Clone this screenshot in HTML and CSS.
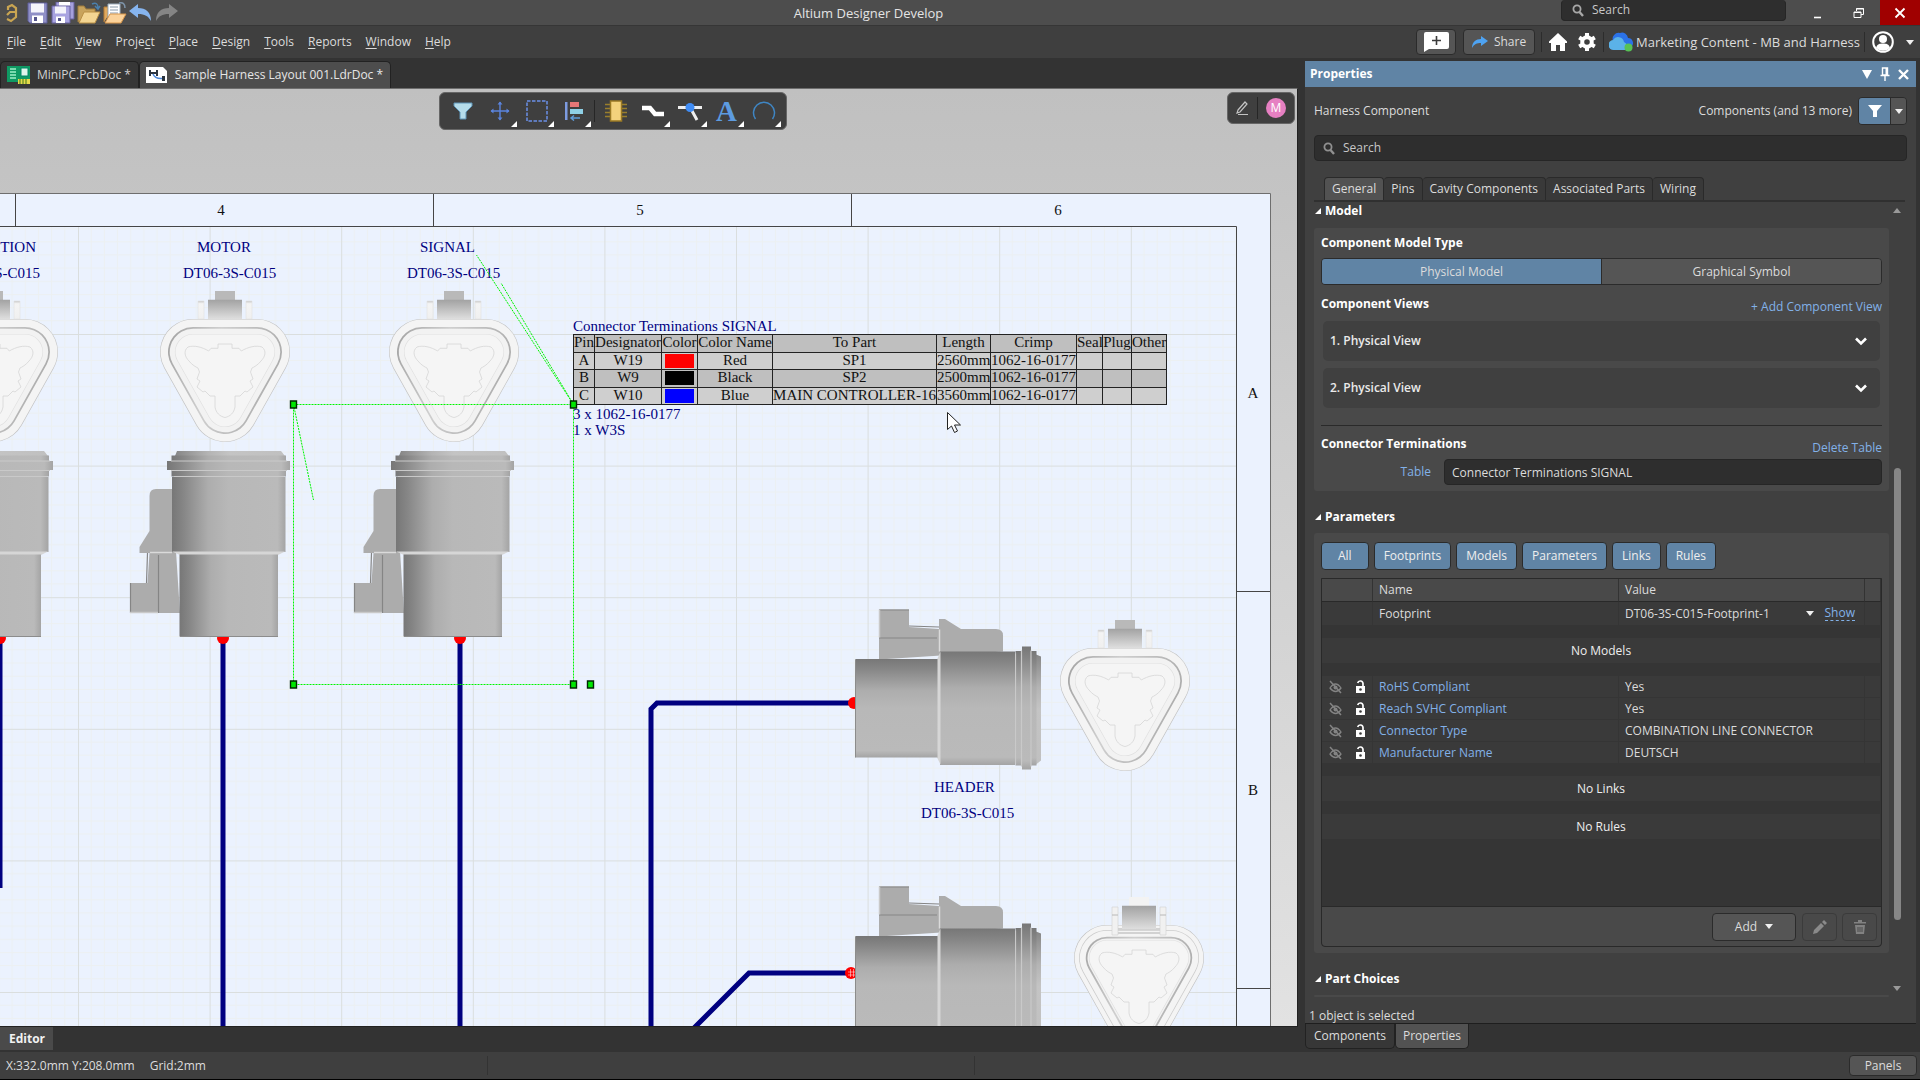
FILE: index.html
```html
<!DOCTYPE html>
<html lang="en">
<head>
<meta charset="utf-8">
<title>Altium Designer Develop</title>
<link rel="stylesheet" href="styles.css">
</head>
<body>
<header class="titlebar">
  <div class="quick">
    <svg class="logo" width="14" height="20" viewBox="0 0 14 20"><path d="M3 7V4l4-2 4 3v9l-5 4-4-2M11 9H5l-3 3" fill="none" stroke="#c9a552" stroke-width="2.200"/></svg>
    <button class="tool" aria-label="Save"><svg width="22" height="22" viewBox="0 0 22 22"><path d="M1 1h19v20H3l-2-2z" fill="#8f8fc6" stroke="#5f5f9a"/><path d="M4 1.500h13v9H4z" fill="#f4f4fb"/><path d="M5 13.500h11V21H5z" fill="#fff"/><path d="M7 15h3v4H7z" fill="#55558c"/></svg></button>
    <button class="tool" aria-label="Save All"><svg width="24" height="22" viewBox="0 0 24 22"><path d="M5 0h18v17H5z" fill="#a5a0dc" stroke="#66619e"/><path d="M8 0h11v6H8z" fill="#fff"/><path d="M1 4h18v17H1z" fill="#a8a3e0" stroke="#66619e"/><path d="M4 4.500h11v7H4z" fill="#f4f4fb"/><path d="M5 14.500h9V21H5z" fill="#fff"/><path d="M7 16h3v3H7z" fill="#55558c"/></svg></button>
    <button class="tool" aria-label="Open"><svg width="24" height="22" viewBox="0 0 24 22"><path d="M1 20V4h6l2 3h9v5" fill="#c8a35c" stroke="#a07c3c"/><path d="M2 21l5-11h16l-5 11z" fill="#f3d592" stroke="#b98f45"/><path d="M15 2c4-2 6 0 6 4m-3-2l3 3 2-3" fill="none" stroke="#4a80ad" stroke-width="1.500"/></svg></button>
    <button class="tool" aria-label="Open Project"><svg width="24" height="22" viewBox="0 0 24 22"><path d="M1 20V5h4v9" fill="#e0a95e" stroke="#b87f36"/><path d="M5 2h12v14H5z" fill="#fff" stroke="#9fb0c0"/><path d="M7 5h8M7 8h8M7 11h8" stroke="#8a9aaa"/><path d="M2 21l5-9h16l-5 9z" fill="#fbd29a" stroke="#d8964a"/><path d="M16 1c4-1 6 1 6 5" fill="none" stroke="#7d93a8" stroke-width="1.500"/></svg></button>
    <button class="tool" aria-label="Undo"><svg width="24" height="18" viewBox="0 0 24 18"><path d="M0 7l9-7v4c8 0 13 4 13 13-3-5-6-7-13-7v4z" fill="#86b4ee"/></svg></button>
    <button class="tool" aria-label="Redo"><svg width="24" height="18" viewBox="0 0 24 18"><path d="M23 7l-9-7v4C6 4 1 8 1 17c3-5 6-7 13-7v4z" fill="#858585"/></svg></button>
  </div>
  <h1 class="app-title">Altium Designer Develop</h1>
  <label class="search top-search">
    <svg width="12" height="13" viewBox="0 0 12 13"><circle cx="5" cy="5" r="3.600" fill="none" stroke="#a8a8a8" stroke-width="1.800"/><path d="M7.500 8l3.500 4" stroke="#a8a8a8" stroke-width="2.400"/></svg>
    <input type="text" placeholder="Search" aria-label="Search">
  </label>
  <div class="winctl">
    <button class="min" aria-label="Minimize"><svg width="12" height="14" viewBox="0 0 12 14"><path d="M3 11.500h7" stroke="#fff" stroke-width="1.600"/></svg></button>
    <button class="restore" aria-label="Restore"><svg width="12" height="12" viewBox="0 0 12 12"><path d="M3.500 4V1.500h7v6H8M1 5h7v5.500H1zM3 2h8M1 5.500h7" fill="none" stroke="#fff"/></svg></button>
    <button class="close" aria-label="Close"><svg width="12" height="12" viewBox="0 0 12 12"><path d="M1.500 1.500l9 9M10.500 1.500l-9 9" stroke="#fff" stroke-width="1.800"/></svg></button>
  </div>
</header>

<nav class="menubar">
  <div class="menus">
    <button><u>F</u>ile</button><button><u>E</u>dit</button><button><u>V</u>iew</button><button>Proje<u>c</u>t</button><button><u>P</u>lace</button><button><u>D</u>esign</button><button><u>T</u>ools</button><button><u>R</u>eports</button><button><u>W</u>indow</button><button><u>H</u>elp</button>
  </div>
  <div class="account">
    <button class="raised note" aria-label="Add comment"><svg width="25" height="20" viewBox="0 0 25 20"><path d="M2 0h21q2 0 2 2v13q0 2-2 2H5l-5 3V2q0-2 2-2z" fill="#fff"/><path d="M12.500 4v9M8 8.500h9" stroke="#3c3c3c" stroke-width="1.600"/></svg></button>
    <button class="raised share"><svg width="16" height="12" viewBox="0 0 16 12"><path d="M9 0l7 5-7 5V7C5 7 2 8 0 12c0-6 4-9 9-9z" fill="#4ea3f2"/></svg>Share</button>
    <i class="vsep"></i>
    <button aria-label="Home"><svg width="18" height="18" viewBox="0 0 18 18"><path d="M9 0l9 8.500V10h-2v8h-5v-6H7v6H2v-8H0V8.500z" fill="#fff"/></svg></button>
    <button class="gear" aria-label="Settings"><svg width="18" height="18" viewBox="0 0 18 18"><circle cx="9" cy="9" r="4.800" fill="none" stroke="#fff" stroke-width="4"/><path d="M9 0v4M9 14v4M1.200 4.500l3.400 2M13.400 11.500l3.400 2M1.200 13.500l3.400-2M13.400 6.500l3.400-2" stroke="#fff" stroke-width="4"/></svg></button>
    <i class="vsep"></i>
    <button class="workspace"><svg width="24" height="20" viewBox="0 0 24 20"><path d="M4 9a6 6 0 0 1 7-8 6 6 0 0 1 8 5 5 5 0 0 1 3 9H8z" fill="#2b72e8"/><path d="M5 18a5 5 0 0 1-1-10 6 6 0 0 1 11 2 4.500 4.500 0 0 1 1 8z" fill="#5bb2e8"/><circle cx="19.500" cy="15.500" r="4" fill="#57c255"/></svg>Marketing Content - MB and Harness</button>
    <i class="vsep"></i>
    <button class="avatar" aria-label="Account"><svg width="22" height="22" viewBox="0 0 22 22"><circle cx="11" cy="11" r="9.800" fill="none" stroke="#fff" stroke-width="2"/><circle cx="11" cy="8" r="4" fill="#fff"/><path d="M4 17c1-4 4-4.500 7-4.500s6 .500 7 4.500a10 10 0 0 1-14 0z" fill="#fff"/></svg><i class="caret"></i></button>
  </div>
</nav>

<main class="work">
  <section class="docs">
    <div class="doc-tabs">
      <button class="doc-tab"><svg width="24" height="18" viewBox="0 0 24 18"><path d="M0 0h23v16H0z" fill="#0f9a63"/><path d="M3 3h6M3 6h6M3 9h6M3 12h6" stroke="#9ff0c8" stroke-width="1.500"/><path d="M14 2h7v8h-7z" fill="#dff5ea" stroke="#008866"/><path d="M11 13h12v5H11z" fill="#e6d94a"/><path d="M13 13v5M16 13v5M19 13v5" stroke="#3d7a1a"/></svg>MiniPC.PcbDoc *</button>
      <button class="doc-tab active"><svg width="21" height="16" viewBox="0 0 21 16"><path d="M0 0h17l4 4v12H0z" fill="#fff"/><path d="M3 3h2v6H3zM5 5h6v2H5zM10 3h2v6h-2zM16 9h3v5h-3z" fill="#2c3540"/><path d="M7 7q2 5 9 4.500" fill="none" stroke="#4a86d8" stroke-width="1.500"/></svg>Sample Harness Layout 001.LdrDoc *</button>
    </div>

    <div class="canvas">
      <svg class="sheet" width="100%" height="100%" aria-label="Harness layout drawing">
        <defs>
          <pattern id="grid" patternUnits="userSpaceOnUse" x="78" y="334" width="131.600" height="131.600">
            <path d="M13.160 0v131.600M26.320 0v131.600M39.480 0v131.600M52.640 0v131.600M65.800 0v131.600M78.960 0v131.600M92.120 0v131.600M105.280 0v131.600M118.440 0v131.600M0 13.160h131.600M0 26.320h131.600M0 39.480h131.600M0 52.640h131.600M0 65.800h131.600M0 78.960h131.600M0 92.120h131.600M0 105.280h131.600M0 118.440h131.600" stroke="#ecf0f1"/>
            <path d="M.5 0v131.600M0 .5h131.600" stroke="#dadede" stroke-width="1"/>
          </pattern>
          <linearGradient id="shell"><stop offset="0" stop-color="#777"/><stop offset=".1" stop-color="#868686"/><stop offset=".32" stop-color="#adadad"/><stop offset=".5" stop-color="#b8b8b8"/><stop offset=".93" stop-color="#bababa"/><stop offset="1" stop-color="#a4a4a4"/></linearGradient>
          <linearGradient id="rim"><stop offset="0" stop-color="#868686"/><stop offset=".3" stop-color="#b4b4b4"/><stop offset=".5" stop-color="#c4c4c4"/><stop offset="1" stop-color="#c0c0c0"/></linearGradient>
          <linearGradient id="hinge" x2="0" y2="1"><stop offset="0" stop-color="#a2a2a2"/><stop offset=".5" stop-color="#c0c0c0"/><stop offset="1" stop-color="#dedede"/></linearGradient>
          <linearGradient id="ear" x2="0" y2="1"><stop offset="0" stop-color="#c8c8c8"/><stop offset=".15" stop-color="#f4f4f4"/><stop offset="1" stop-color="#f0f0f0"/></linearGradient>
          <linearGradient id="seal" gradientUnits="userSpaceOnUse" x1="-60" y1="30" x2="60" y2="60"><stop offset="0" stop-color="#a4a4a4"/><stop offset=".4" stop-color="#cfcfcf"/><stop offset="1" stop-color="#a8a8a8"/></linearGradient>
          <path id="tri" d="M-32 33h64L0 90z" stroke-linejoin="round"/>
          <path id="cavity" d="M-7 29.300V25H7v4.300h7l2.300 2.700C23 28 31 26 37 28c5 4 3 10-1 14-3 4-7 6-9 7l-1.500 4L28 60l-3 2 3 6-6 5-2-1-5 5h-5v11c-1 6-5 9.500-10 10.500-5-1-9-4.500-10-10.500V77h-5l-5-5-2 1-6-5 3-6-3-2 2.500-7-1.500-4c-2-1-6-3-9-7-4-4-6-10-1-14 6-2 14 0 20.700 4l2.300-2.700z" fill="#f5f5f5" stroke="#d6d6d6" stroke-width=".8"/>
          <g id="face">
            <path d="M-10-28h20v11h-20z" fill="#b9b9b9"/>
            <path d="M-17-19.300h34V0h-34z" fill="url(#hinge)"/>
            <path d="M-27-18h6V0h-6zM21-18h6V0h-6z" fill="url(#ear)" stroke="#e0e0e0" stroke-width=".6"/>
            <use href="#tri" stroke="#c4c4c4" stroke-width="66" fill="#f5f5f5"/>
            <use href="#tri" stroke="#f4f4f4" stroke-width="64.800" fill="#f5f5f5"/>
            <use href="#tri" stroke="url(#seal)" stroke-width="50" fill="#f5f5f5"/>
            <use href="#tri" stroke="#f2f2f2" stroke-width="46.500" fill="#f5f5f5"/>
            <use href="#tri" stroke="#dfdfdf" stroke-width="36.200" fill="#f5f5f5"/>
            <use href="#tri" stroke="#f5f5f5" stroke-width="35" fill="#f5f5f5"/>
            <use href="#cavity"/>
          </g>
          <g id="face-open">
            <path d="M-10-28h20v11h-20z" fill="#f3f3f3"/>
            <use href="#tri" stroke="#c4c4c4" stroke-width="66" fill="#f5f5f5"/>
            <use href="#tri" stroke="#f4f4f4" stroke-width="64.800" fill="#f5f5f5"/>
            <use href="#tri" stroke="#cdcdcd" stroke-width="56" fill="#f5f5f5"/>
            <use href="#tri" stroke="#f4f4f4" stroke-width="54.500" fill="#f5f5f5"/>
            <use href="#tri" stroke="url(#seal)" stroke-width="42.500" fill="#f5f5f5"/>
            <use href="#tri" stroke="#f2f2f2" stroke-width="39" fill="#f5f5f5"/>
            <use href="#tri" stroke="#dfdfdf" stroke-width="36.200" fill="#f5f5f5"/>
            <use href="#tri" stroke="#f5f5f5" stroke-width="35" fill="#f5f5f5"/>
            <path d="M-27 4h54M-27 8h54" stroke="#b0b0b0"/>
            <path d="M-17-19.300h34V4h-34z" fill="url(#hinge)"/>
            <path d="M-27-18h6V10h-6zM21-18h6V10h-6z" fill="#f1f1f1" stroke="#d0d0d0" stroke-width=".6"/>
            <path d="M-27-10h6M21-10h6" stroke="#b8b8b8"/>
            <use href="#cavity"/>
          </g>
          <g id="side">
            <path d="M172 489h-16q-6.500 0-6.500 7v35l-10 16v6h10l-2 30H130v30h50z" fill="#acacac"/>
            <path d="M130.500 583v30M158.500 555v58M147.500 553l-1 30" stroke="#858585" stroke-width="1.200" fill="none"/>
            <path d="M150 552.500h22" stroke="#dadada" stroke-width="1.500"/>
            <path d="M130 612.500h28" stroke="#c9c9c9" stroke-width="1.500"/>
            <path d="M177 451h104l4 5H175z" fill="url(#rim)"/>
            <path d="M171.500 455.500H286v6H171.500zM171.500 470h114.500v6.500H171.500z" fill="url(#shell)"/>
            <path d="M167 461h123v9H167z" fill="url(#shell)"/>
            <path d="M171 461h116M171 470.500h116M174 476.500h110" stroke="#c9c9c9" stroke-width="1.200"/>
            <path d="M172 477h113.500v75H172z" fill="url(#shell)"/>
            <path d="M172 551.500h113l-7 3.500h-98z" fill="#d6d6d6"/>
            <path d="M179.500 554.500H278v82h-98.500z" fill="url(#shell)"/>
            <path d="M180 636.500h98" stroke="#8c8c8c"/>
          </g>
          <path id="handle" d="M-3-3.500h6v7h-6z" fill="#00e800" stroke="#002800" stroke-width="1.400"/>
        </defs>
        <g transform="translate(0 -89)">
          <path d="M-10 193.500H1270.500V1100H-10z" fill="#ebf2fe" stroke="#6e6e6e"/>
          <path d="M-10 227H1236V1100H-10z" fill="url(#grid)"/>
          <path d="M-10 226.500H1236.500V1100M15.500 194v32M433.500 194v32M851.500 194v32M1236 591.500h34M1236 988.500h34" fill="none" stroke="#454545"/>
          <g class="zone" text-anchor="middle"><text x="221" y="215">4</text><text x="640" y="215">5</text><text x="1058" y="215">6</text><text x="1253" y="398">A</text><text x="1253" y="795">B</text></g>

          <path d="M0 640v248M223 640v400M460 640v400M852 703H657l-6 6v331M850 973H749l-65 65" fill="none" stroke="#000080" stroke-width="5"/>
          <g fill="#f00"><circle cx="0" cy="638" r="6"/><circle cx="223" cy="638" r="6"/><circle cx="460" cy="638" r="6"/><circle cx="854" cy="703" r="6"/><circle cx="851" cy="973" r="6"/></g>
          <path d="M850.500 969v8M853.500 969v8M848 972h7M848 975h7" stroke="#fff" stroke-opacity=".5"/>

          <use href="#side" x="-237"/><use href="#side"/><use href="#side" x="224"/>
          <use href="#side" transform="translate(1492 479.500) rotate(90)"/>
          <use href="#side" transform="translate(1492 756.500) rotate(90)"/>
          <use href="#face" transform="translate(-7 319)"/>
          <use href="#face" transform="translate(225 319)"/>
          <use href="#face" transform="translate(454 319)"/>
          <use href="#face" transform="translate(1125 648)"/>
          <use href="#face-open" transform="translate(1139 925)"/>

          <g class="ink">
            <text x="36" y="252" text-anchor="end">IGNITION</text><text x="40" y="278" text-anchor="end">DT06-3S-C015</text>
            <text x="197" y="252">MOTOR</text><text x="183" y="278">DT06-3S-C015</text>
            <text x="420" y="252">SIGNAL</text><text x="407" y="278">DT06-3S-C015</text>
            <text x="934" y="792">HEADER</text><text x="921" y="818">DT06-3S-C015</text>
          </g>
        </g>
      </svg>

      <div class="terminations">
        <table>
          <caption>Connector Terminations SIGNAL</caption>
          <colgroup><col class="c-pin"><col class="c-des"><col class="c-col"><col class="c-name"><col class="c-part"><col class="c-len"><col class="c-crimp"><col class="c-seal"><col class="c-plug"><col class="c-other"></colgroup>
          <thead><tr><th>Pin</th><th>Designator</th><th>Color</th><th>Color Name</th><th>To Part</th><th>Length</th><th>Crimp</th><th>Seal</th><th>Plug</th><th>Other</th></tr></thead>
          <tbody>
            <tr><td>A</td><td>W19</td><td><i class="swatch red"></i></td><td>Red</td><td>SP1</td><td>2560mm</td><td>1062-16-0177</td><td></td><td></td><td></td></tr>
            <tr><td>B</td><td>W9</td><td><i class="swatch black"></i></td><td>Black</td><td>SP2</td><td>2500mm</td><td>1062-16-0177</td><td></td><td></td><td></td></tr>
            <tr><td>C</td><td>W10</td><td><i class="swatch blue"></i></td><td>Blue</td><td>MAIN CONTROLLER-16</td><td>3560mm</td><td>1062-16-0177</td><td></td><td></td><td></td></tr>
          </tbody>
        </table>
        <p>3 x 1062-16-0177</p>
        <p>1 x W3S</p>
      </div>

      <svg class="overlay" width="100%" height="100%" aria-hidden="true">
        <g transform="translate(0 -89)">
          <path d="M293.500 404.500h280v280h-280zM573.500 404.500L476.500 255M573.500 404.500L501 283M293.500 404.500L313.500 500" fill="none" stroke="#00f400" stroke-dasharray="2 1"/>
          <use href="#handle" x="293.500" y="404.500"/><use href="#handle" x="573.500" y="404.500"/><use href="#handle" x="293.500" y="684.500"/><use href="#handle" x="573.500" y="684.500"/><use href="#handle" x="590.500" y="684.500"/>
          <path d="M947.500 412.500v17l4-3.500 3 6.500 3-1.500-3-6h6z" fill="#fff" stroke="#222"/>
        </g>
      </svg>

      <div class="active-bar">
        <button aria-label="Filter"><svg width="20" height="18" viewBox="0 0 20 18"><path d="M1 1h18v3l-6 6v7H7v-7L1 4z" fill="#b5dcea" stroke="#5f95b8"/></svg></button>
        <button class="more" aria-label="Move"><svg width="20" height="20" viewBox="0 0 20 20"><path d="M10 1v18M1 10h18" stroke="#5b84dd" stroke-width="1.400"/><path d="M7.500 3.500L10 .5l2.500 3M7.500 16.500l2.500 3 2.500-3M3.500 7.500L.5 10l3 2.500M16.500 7.500l3 2.500-3 2.500" fill="#5b84dd"/></svg></button>
        <button class="more" aria-label="Select"><svg width="22" height="22" viewBox="0 0 22 22"><path d="M1 1h20v20H1z" fill="none" stroke="#6b90e8" stroke-width="1.500" stroke-dasharray="3.500 1.500"/></svg></button>
        <button class="more" aria-label="Align"><svg width="20" height="20" viewBox="0 0 20 20"><path d="M1 1h2.500v18H1z" fill="#7d9be0"/><path d="M6 1h9v5H6z" fill="#e57777"/><path d="M6 8h13v5H6z" fill="#8ed0e6"/><path d="M16 17H7m3-2.500L7 17l3 2.500" fill="none" stroke="#5d9bd8" stroke-width="1.500"/></svg></button>
        <i class="bar-sep"></i>
        <button aria-label="Place component"><svg width="22" height="22" viewBox="0 0 22 22"><path d="M0 4.500h22M0 8.500h22M0 12.500h22M0 16.500h22" stroke="#9a7f2c" stroke-width="1.300"/><path d="M5.500 1h11v20h-11z" fill="#f3d27c" stroke="#9a7a25" stroke-width="1.500"/></svg></button>
        <button class="more" aria-label="Place bundle"><svg width="22" height="12" viewBox="0 0 22 12"><path d="M0 3h8l5 6h9" fill="none" stroke="#fff" stroke-width="4.500"/></svg></button>
        <button class="more" aria-label="Place connection point"><svg width="24" height="20" viewBox="0 0 24 20"><path d="M0 6.500h24M13 8l6 11" stroke="#eee" stroke-width="3"/><circle cx="12" cy="6.500" r="4.500" fill="#3f8cf5"/></svg></button>
        <button class="more letter" aria-label="Place text">A</button>
        <button class="more" aria-label="Place arc"><svg width="24" height="20" viewBox="0 0 24 20"><path d="M3.500 18A10.500 10.500 0 1 1 20.500 18" fill="none" stroke="#3f86c4" stroke-width="1.500"/></svg></button>
      </div>
      <div class="users-bar">
        <button aria-label="Edit"><svg width="13" height="14" viewBox="0 0 13 14"><path d="M2 9l7-8 2 2-7 8-3 1zM2 13.500h10" fill="none" stroke="#c4c4c4" stroke-width="1.200"/></svg></button>
        <i class="bar-sep"></i>
        <span class="user">M</span>
      </div>
    </div>
    <div class="editor-tabs"><button class="editor-tab">Editor</button></div>
  </section>

  <aside class="side">
    <div class="panel">
      <header class="panel-head">
        <h2>Properties</h2>
        <button aria-label="Panel menu"><svg width="10" height="9" viewBox="0 0 10 9"><path d="M0 0h10L5 9z" fill="#fff"/></svg></button>
        <button aria-label="Pin"><svg width="10" height="14" viewBox="0 0 10 14"><path d="M2.500 1h5v7h-5zM.5 8.500h9M5 9v5" fill="none" stroke="#fff" stroke-width="1.400"/><path d="M5.500 1h2v7h-2z" fill="#fff"/></svg></button>
        <button aria-label="Close panel"><svg width="11" height="11" viewBox="0 0 11 11"><path d="M1 1l9 9M10 1l-9 9" stroke="#fff" stroke-width="2.400"/></svg></button>
      </header>
      <div class="object-row">
        <span>Harness Component</span>
        <span class="scope">Components (and 13 more)</span>
        <div class="filter"><button class="funnel" aria-label="Filter objects"><svg width="14" height="12" viewBox="0 0 14 12"><path d="M0 0h14L9 6v6H5V6z" fill="#fff"/></svg></button><button class="funnel-more" aria-label="Filter options"><i class="caret"></i></button></div>
      </div>
      <label class="search panel-search">
        <svg width="12" height="13" viewBox="0 0 12 13"><circle cx="5" cy="5" r="3.600" fill="none" stroke="#909090" stroke-width="1.800"/><path d="M7.500 8l3.500 4" stroke="#909090" stroke-width="2.400"/></svg>
        <input type="text" placeholder="Search" aria-label="Search properties">
      </label>
      <div class="tabs"><button class="on">General</button><button>Pins</button><button>Cavity Components</button><button>Associated Parts</button><button>Wiring</button></div>

      <div class="body">
        <div class="sections">
          <h3 class="section">Model</h3>
          <div class="card model">
            <h4>Component Model Type</h4>
            <div class="toggle"><button class="on">Physical Model</button><button>Graphical Symbol</button></div>
            <div class="row views-head"><h4>Component Views</h4><a href="#add">+ Add Component View</a></div>
            <div class="views">
              <button class="view">1. Physical View<svg width="12" height="9" viewBox="0 0 12 9"><path d="M1 1.500l5 5 5-5" fill="none" stroke="#fff" stroke-width="2.600"/></svg></button>
              <button class="view">2. Physical View<svg width="12" height="9" viewBox="0 0 12 9"><path d="M1 1.500l5 5 5-5" fill="none" stroke="#fff" stroke-width="2.600"/></svg></button>
            </div>
            <hr>
            <div class="row"><h4>Connector Terminations</h4><a href="#delete">Delete Table</a></div>
            <div class="field"><label for="tbl">Table</label><input id="tbl" type="text" value="Connector Terminations SIGNAL"></div>
          </div>

          <h3 class="section">Parameters</h3>
          <div class="card params">
            <div class="chips"><button class="wide">All</button><button>Footprints</button><button>Models</button><button>Parameters</button><button>Links</button><button>Rules</button></div>
            <div class="gridbox">
              <table>
                <colgroup><col class="p-icons"><col><col><col class="p-end"></colgroup>
                <thead><tr><th></th><th>Name</th><th>Value</th><th></th></tr></thead>
                <tbody>
                  <tr class="foot"><td></td><td>Footprint</td><td><div class="pick"><span>DT06-3S-C015-Footprint-1</span><i class="caret"></i><a href="#show">Show</a></div></td><td></td></tr>
                  <tr class="gap"><td colspan="4"></td></tr>
                  <tr class="none"><td colspan="4">No Models</td></tr>
                  <tr class="gap"><td colspan="4"></td></tr>
                  <tr><td><svg class="marks" width="40" height="16" viewBox="0 0 40 16"><use href="#marks"/></svg></td><td><a href="#p1">RoHS Compliant</a></td><td>Yes</td><td></td></tr>
                  <tr><td><svg class="marks" width="40" height="16" viewBox="0 0 40 16"><use href="#marks"/></svg></td><td><a href="#p2">Reach SVHC Compliant</a></td><td>Yes</td><td></td></tr>
                  <tr><td><svg class="marks" width="40" height="16" viewBox="0 0 40 16"><use href="#marks"/></svg></td><td><a href="#p3">Connector Type</a></td><td>COMBINATION LINE CONNECTOR</td><td></td></tr>
                  <tr><td><svg class="marks" width="40" height="16" viewBox="0 0 40 16"><use href="#marks"/></svg></td><td><a href="#p4">Manufacturer Name</a></td><td>DEUTSCH</td><td></td></tr>
                  <tr class="gap"><td colspan="4"></td></tr>
                  <tr class="none"><td colspan="4">No Links</td></tr>
                  <tr class="gap"><td colspan="4"></td></tr>
                  <tr class="none"><td colspan="4">No Rules</td></tr>
                </tbody>
              </table>
              <div class="grid-foot">
                <button class="raised add">Add<i class="caret"></i></button>
                <button class="ghost" aria-label="Edit parameter"><svg width="14" height="14" viewBox="0 0 14 14"><path d="M0 14l1-4 7-7 3 3-7 7zM9 2l2-2 3 3-2 2z" fill="#8a8a8a"/></svg></button>
                <button class="ghost" aria-label="Delete parameter"><svg width="12" height="14" viewBox="0 0 12 14"><path d="M4 0h4v2h4v1.500H0V2h4zM1 5h10l-1 9H2z" fill="#828282"/><path d="M4 7v5M6 7v5M8 7v5" stroke="#4a4a4a"/></svg></button>
              </div>
            </div>
          </div>

          <h3 class="section">Part Choices</h3>
          <div class="card sliver"></div>
        </div>
        <div class="scroll"><i class="up"></i><i class="thumb"></i><i class="down"></i></div>
      </div>
      <p class="selected">1 object is selected</p>
    </div>
    <div class="panel-tabs"><button>Components</button><button class="on">Properties</button></div>
  </aside>
</main>

<footer class="status">
  <div class="cell"><span>X:332.0mm Y:208.0mm</span><span>Grid:2mm</span></div>
  <div class="cell"></div>
  <div class="cell last"><button class="raised panels">Panels</button></div>
</footer>

<svg class="defs" width="0" height="0" aria-hidden="true"><defs><g id="marks">
  <path d="M1 9q5.500-8 11 0-5.500 7-11 0z" fill="none" stroke="#848484" stroke-width="1.300"/><circle cx="6.500" cy="8.500" r="2" fill="#848484"/><path d="M1 2l11 12" stroke="#848484" stroke-width="1.500"/>
  <path d="M27 7h9v7h-9z" fill="#fff"/><path d="M34 7V4.500a2.700 2.700 0 0 0-5.300-.500" fill="none" stroke="#fff" stroke-width="1.700"/><circle cx="31.500" cy="10.500" r="1.300" fill="#3a3a3a"/>
</g></defs></svg>
</body>
</html>
```
FILE: styles.css
```css
* { box-sizing: border-box; }
html, body { height: 100%; }
body {
  margin: 0;
  display: flex;
  flex-direction: column;
  background: #333;
  color: #dcdcdc;
  font: 12px/16px "Open Sans", "Noto Sans", sans-serif;
  overflow: hidden;
  border-bottom: 1px solid #000;
}
h1, h2, h3, h4, p { margin: 0; font-size: inherit; }
button {
  margin: 0; padding: 0; border: 0;
  background: none; color: inherit; font: inherit;
  display: inline-flex; align-items: center; justify-content: center;
}
input { font: inherit; color: #dcdcdc; background: none; border: 0; padding: 0; min-width: 0; }
input::placeholder { color: #c8c8c8; opacity: 1; }
a { color: #82b1e8; text-decoration: none; }
svg { display: block; flex: none; }
.defs { position: absolute; }
.caret { border: 4px solid transparent; border-top: 5px solid #f0f0f0; border-bottom: 0; }
.raised { background: #555; border: 1px solid #2b2b2b; border-radius: 4px; }

/* title bar */
.titlebar { display: flex; height: 25px; background: #4d4d4d; }
.quick { display: flex; align-items: center; gap: 2px; padding-left: 5px; width: 176px; }
.logo { margin-right: 6px; }
.app-title { flex: 1; text-align: center; font-size: 13px; font-weight: 400; line-height: 26px; color: #e4e4e4; }
.search { display: flex; align-items: center; gap: 8px; background: #2e2e2e; border: 1px solid #262626; border-radius: 4px; }
.search input { flex: 1; }
.top-search { width: 225px; height: 21px; padding-left: 10px; border-top: 0; }
.winctl { display: flex; width: 134px; justify-content: flex-end; }
.winctl button { width: 42px; }
.winctl .close { width: 40px; background: #a00000; }

/* menu bar */
.menubar { display: flex; justify-content: space-between; height: 33px; background: #3f3f3f; border-top: 1px solid #363636; }
.menus { display: flex; gap: 14px; padding-left: 7px; }
.menus u { text-underline-offset: 2px; }
.account { display: flex; align-items: center; padding-right: 6px; }
.note { width: 40px; height: 26px; margin-right: 7px; }
.share { width: 72px; height: 26px; gap: 6px; margin-right: 6px; }
.vsep { width: 1px; height: 20px; background: #2c2c2c; margin-right: 7px; }
.gear { margin: 0 7px 0 11px; }
.workspace { width: 252px; justify-content: flex-start; gap: 3px; margin: 0 3px 0 -2px; font-size: 13px; white-space: nowrap; }
.avatar { gap: 12px; }

/* work area */
.work { flex: 1; min-height: 0; display: grid; grid-template-columns: minmax(0, 1fr) 615px; }
.docs { display: flex; flex-direction: column; min-width: 0; min-height: 0; padding-right: 7px; }
.doc-tabs { display: flex; height: 30px; padding-top: 3px; }
.doc-tab { gap: 6px; padding: 0 7px 0 6px; border: 1px solid #222; border-bottom: 0; border-radius: 5px 5px 0 0; background: #373737; color: #d2d2d2; }
.doc-tab.active { background: #4d4d4d; color: #e6e6e6; gap: 8px; }
.canvas { flex: 1; min-height: 0; position: relative; overflow: hidden; background: linear-gradient(#c0c0c0, #e2e2e2); border-top: 1px solid #6e6e6e; border-right: 1px solid #222; }
.sheet, .overlay { position: absolute; left: 0; top: 0; }
.sheet text { font: 15px "Liberation Serif", serif; }
.zone { fill: #111; }
.ink { fill: #000080; }
.terminations { position: absolute; left: 573px; top: 228px; font: 15px/16px "Liberation Serif", serif; color: #000080; }
.terminations table { table-layout: fixed; width: 594px; border-collapse: collapse; color: #111; line-height: 15px; margin-bottom: 1px; }
.terminations caption { padding-top: 2px; text-align: left; color: #000080; white-space: nowrap; }
.terminations th, .terminations td { border: 1px solid #222; padding: 0; font-weight: 400; text-align: center; vertical-align: top; white-space: nowrap; }
.terminations tr { height: 18px; background: #cfcfcf; }
.terminations tbody tr:nth-child(odd) { height: 17px; }
.terminations thead tr, .terminations tbody tr:nth-child(2) { background: #bfbfbf; }
.c-pin { width: 21px; } .c-des { width: 67px; } .c-col { width: 36px; } .c-name { width: 75px; }
.c-part { width: 164px; } .c-len { width: 54px; } .c-crimp { width: 86px; } .c-seal { width: 26px; } .c-plug { width: 29px; }
.swatch { display: block; width: 29px; height: 14px; margin: 1px auto 0; }
.red { background: #f00; } .black { background: #000; } .blue { background: #00f; }

.active-bar, .users-bar { position: absolute; top: 3px; display: flex; align-items: center; background: #3f3f3f; border: 1px solid #666; border-radius: 6px; }
.active-bar { left: 439px; height: 38px; padding: 0 4px; }
.active-bar button { width: 37px; height: 36px; position: relative; }
.active-bar .more::after { content: ""; position: absolute; right: 1px; bottom: 2px; border: 3px solid transparent; border-right-color: #fff; border-bottom-color: #fff; }
.active-bar .letter { font: bold 29px/36px "Liberation Serif", serif; color: #5d9be0; }
.bar-sep { width: 1px; height: 22px; background: #262626; }
.active-bar .bar-sep { margin: 0 2px; }
.users-bar { right: 2px; width: 68px; height: 32px; justify-content: space-evenly; }
.user { width: 20px; height: 20px; border-radius: 50%; background: #e680c2; color: #fff; text-align: center; line-height: 20px; }
.editor-tabs { height: 26px; display: flex; align-items: flex-start; border-top: 1px solid #222; }
.editor-tab { height: 23px; padding: 0 8px 0 9px; font-weight: 700; background: #4a4a4a; color: #f2f2f2; }

/* properties panel */
.side { display: flex; flex-direction: column; min-height: 0; padding: 3px 4px 0 0; }
.panel { flex: 1; min-height: 0; display: flex; flex-direction: column; background: #404040; border-bottom: 1px solid #1e1e1e; }
.panel-head { display: flex; align-items: center; gap: 8px; height: 26px; padding: 0 7px 0 5px; background: #6084a5; color: #fff; }
.panel-head h2 { flex: 1; font-weight: 700; }
.object-row { display: flex; align-items: center; height: 48px; padding: 0 9px; gap: 6px; }
.scope { margin-left: auto; }
.filter { display: flex; height: 28px; border: 1px solid #2b2b2b; border-radius: 4px; overflow: hidden; }
.funnel { width: 31px; background: #6084a5; }
.funnel-more { width: 16px; background: #555; border-left: 1px solid #2b2b2b; }
.panel-search { height: 26px; margin: 0 9px 16px; padding-left: 8px; }
.tabs { display: flex; margin: 0 11px 0 9px; padding-left: 10px; border-bottom: 2px solid #303030; }
.tabs button { height: 23px; padding: 0 7px; background: #393939; border: 1px solid #2a2a2a; border-left-width: 0; border-bottom: 0; border-radius: 4px 4px 0 0; }
.tabs .on { background: #525252; border-left-width: 1px; }
.body { flex: 1; min-height: 0; display: flex; padding-left: 9px; overflow: hidden; }
.sections { flex: 1; min-width: 0; }
.section { display: flex; align-items: center; gap: 4px; height: 22px; margin: 15px 0 5px; padding-left: 1px; color: #fff; font-weight: 700; }
.section:first-child { height: 18px; margin: 0 0 8px; }
.section::before { content: ""; border: 3px solid transparent; border-right-color: #fff; border-bottom-color: #fff; }
.card { background: #494949; border-radius: 3px; padding: 6px 7px; }
.card h4 { font-weight: 700; line-height: 18px; color: #fff; }
.toggle { display: flex; height: 27px; margin-top: 6px; border: 1px solid #2b2b2b; border-radius: 4px; overflow: hidden; }
.toggle button { flex: 1; background: #555; }
.toggle .on { background: #6084a5; border-right: 1px solid #2b2b2b; }
.row { display: flex; justify-content: space-between; height: 24px; }
.row a { line-height: 26px; }
.views-head { margin: 10px 0 2px; }
.views-head a { line-height: 24px; }
.views { display: flex; flex-direction: column; gap: 7px; padding: 0 2px; }
.view { justify-content: space-between; height: 40px; padding: 0 13px 0 7px; background: #404040; border-radius: 5px; font-weight: 600; color: #eaeaea; }
hr { margin: 17px 0 9px; border: 0; border-top: 1px solid #2a2a2a; }
.field { display: flex; align-items: center; gap: 13px; }
.field label { width: 110px; text-align: right; color: #82b1e8; }
.field input { flex: 1; height: 26px; padding: 0 7px; background: #2e2e2e; border: 1px solid #262626; border-radius: 4px; }
.params { padding-top: 9px; }
.chips { display: flex; gap: 5px; margin-bottom: 8px; }
.chips button { height: 28px; padding: 0 9px; background: #6084a5; border: 1px solid #2b2b2b; border-radius: 4px; color: #eee; }
.chips .wide { padding: 0 16px; }
.gridbox { display: flex; flex-direction: column; justify-content: space-between; height: 369px; background: #353535; border: 1px solid #292929; border-radius: 0 0 4px 4px; }
.gridbox table { width: 100%; table-layout: fixed; border-collapse: separate; border-spacing: 0; }
.p-icons { width: 51px; } .p-end { width: 16px; }
.gridbox th { height: 23px; padding: 0 6px; background: #494949; text-align: left; font-weight: 400; border-bottom: 1px solid #292929; border-right: 1px solid #333; }
.gridbox td { height: 22px; padding: 0 6px; background: #3a3a3a; border-bottom: 1px solid #353535; border-right: 1px solid #353535; white-space: nowrap; }
.gridbox tr td:first-child { padding: 0 0 0 7px; }
.gridbox .foot td { height: 24px; }
.gridbox .gap td { height: 12px; background: #353535; border: 0; }
.gridbox .none td:first-child { height: 26px; text-align: center; padding: 0; color: #eee; }
.pick { display: flex; align-items: center; gap: 11px; }
.pick span { flex: 1; }
.pick a { border-bottom: 1px dashed #82b1e8; line-height: 14px; margin-right: 3px; }
.grid-foot { display: flex; justify-content: flex-end; align-items: center; gap: 5px; height: 40px; padding-right: 4px; background: #494949; border-top: 1px solid #292929; border-radius: 0 0 4px 4px; }
.add { width: 84px; height: 28px; gap: 8px; margin-right: 1px; }
.ghost { width: 35px; height: 28px; border: 1px solid #3b3b3b; border-radius: 4px; }
.sliver { height: 2px; padding: 0; }
.scroll { display: flex; flex-direction: column; align-items: center; width: 27px; padding: 6px 11px 8px 0; }
.up, .down { border: 4px solid transparent; }
.up { border-bottom: 5px solid #999; border-top: 0; }
.down { border-top: 5px solid #999; border-bottom: 0; margin-top: auto; }
.thumb { width: 7px; height: 452px; margin-top: 255px; background: #868686; border-radius: 4px; }
.selected { height: 24px; padding: 9px 4px 0; line-height: 16px; }
.panel-tabs { display: flex; height: 28px; align-items: flex-start; }
.panel-tabs button { height: 25px; padding: 0 8px; border: 1px solid #222; border-top: 0; border-radius: 0 0 5px 5px; background: #373737; }
.panel-tabs .on { padding: 0 7px; background: #525252; }

/* status bar */
.status { display: grid; grid-template-columns: 488px 487px 1fr; align-items: center; height: 27px; background: #3f3f3f; }
.cell { display: flex; align-items: center; gap: 15px; height: 19px; padding-left: 6px; border-right: 1px solid #333; }
.cell.last { justify-content: flex-end; border: 0; padding-right: 3px; }
.panels { width: 68px; height: 21px; }
```
